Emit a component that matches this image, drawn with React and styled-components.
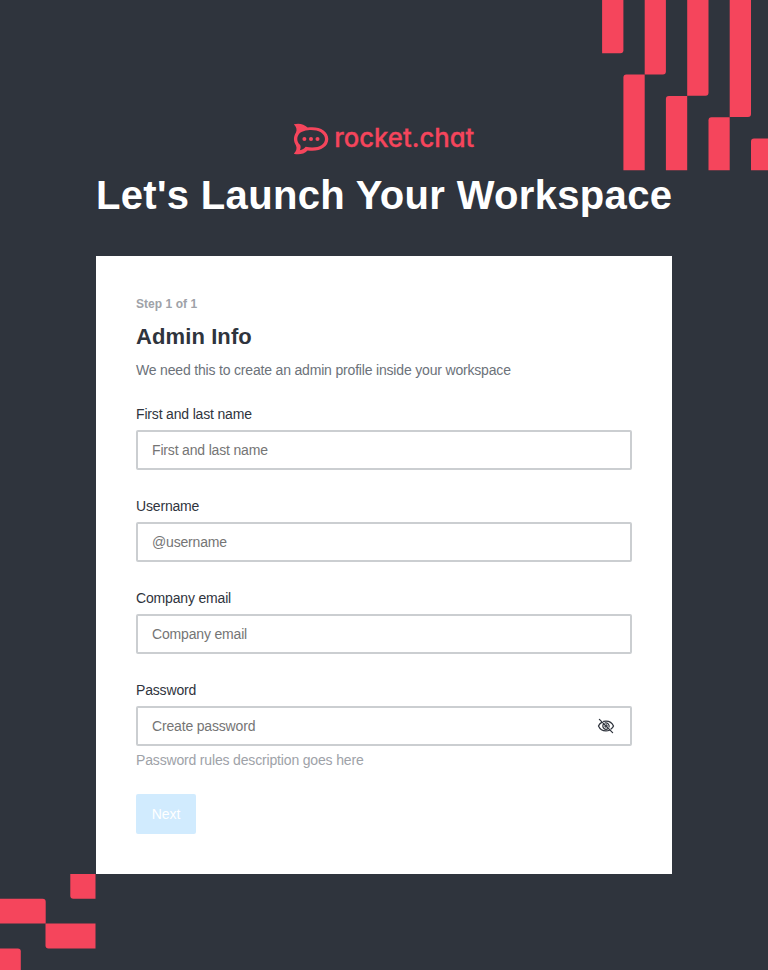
import React from 'react';
import styled, { createGlobalStyle } from 'styled-components';

const GlobalStyle = createGlobalStyle`
  *, *::before, *::after { box-sizing: border-box; }
  body {
    margin: 0;
    background: #2f343d;
    font-family: 'Liberation Sans', Arial, sans-serif;
  }
  h1, h2, p { margin: 0; }
`;

const Page = styled.div`
  position: relative;
  display: flex;
  flex-direction: column;
  align-items: center;
  width: 100%;
  height: 970px;
  padding-top: 123px;
  overflow: hidden;
  background: #2f343d;
`;

const Decoration = styled.svg`
  position: absolute;
  fill: #f5455c;
  ${({ $corner }) => ($corner === 'top' ? 'top: 0; right: 0;' : 'bottom: 0; left: 0;')}
`;

const Logo = styled.svg`
  position: relative;
  display: block;
  width: 182px;
  height: 32px;
  overflow: visible;
  fill: #f5455c;
`;

const Wordmark = styled.text`
  font-family: Inter, Lato, sans-serif;
  font-size: 26px;
  font-weight: 500;
  font-feature-settings: 'cv11';
  stroke: #f5455c;
  stroke-width: 0.3px;
`;

const Title = styled.h1`
  position: relative;
  width: 576px;
  height: 48px;
  margin-top: 16px;
  color: #fff;
  font-size: 40px;
  font-weight: 700;
  line-height: 48px;
  letter-spacing: 0.33px;
  white-space: nowrap;
`;

const Card = styled.form`
  display: flex;
  flex-direction: column;
  align-items: flex-start;
  width: 576px;
  height: 618px;
  margin-top: 37px;
  padding: 40px;
  background: #fff;
`;

const Step = styled.p`
  color: #9ea2a8;
  font-size: 12px;
  font-weight: 700;
  line-height: 16px;
  letter-spacing: 0.05px;
`;

const Heading = styled.h2`
  margin-top: 9px;
  color: #2f343d;
  font-size: 22px;
  font-weight: 700;
  line-height: 32px;
  letter-spacing: 0.1px;
`;

const Intro = styled.p`
  margin-top: 7px;
  color: #6c727a;
  font-size: 14px;
  line-height: 20px;
  letter-spacing: -0.18px;
`;

const Fields = styled.div`
  display: flex;
  flex-direction: column;
  gap: 22px;
  width: 100%;
  margin-top: 20px;
`;

const Field = styled.div`
  display: flex;
  flex-direction: column;
  height: 70px;
`;

const Label = styled.label`
  margin: 4px 0 6px;
  color: #2f343d;
  font-size: 14px;
  line-height: 20px;
  letter-spacing: -0.17px;
`;

const InputBox = styled.div`
  display: flex;
  flex: none;
  align-items: center;
  height: 40px;
  padding: 0 14px;
  border: 2px solid #cbced1;
  border-radius: 2px;
  background: #fff;
`;

const Input = styled.input`
  flex: 1;
  min-width: 0;
  height: 20px;
  padding: 0;
  border: 0;
  outline: 0;
  background: transparent;
  color: #2f343d;
  font: 14px/20px 'Liberation Sans', Arial, sans-serif;
  letter-spacing: -0.17px;
  &::placeholder { color: #757575; opacity: 1; }
`;

const EyeIcon = styled.svg`
  flex: none;
  width: 20px;
  height: 20px;
  fill: none;
  stroke: #2f343d;
  stroke-width: 1.25;
  stroke-linecap: round;
`;

const Hint = styled.p`
  margin-top: 4px;
  color: #9ea2a8;
  font-size: 14px;
  line-height: 20px;
  letter-spacing: -0.165px;
`;

const NextButton = styled.button`
  width: 60px;
  height: 40px;
  margin-top: 24px;
  padding: 0;
  border: 0;
  border-radius: 2px;
  background: #d1ebfe;
  color: #fff;
  font: 14px/20px 'Liberation Sans', Arial, sans-serif;
  letter-spacing: -0.1px;
`;

const fields = [
  { id: 'name', label: 'First and last name', placeholder: 'First and last name' },
  { id: 'username', label: 'Username', placeholder: '@username' },
  { id: 'email', label: 'Company email', placeholder: 'Company email' },
  { id: 'password', label: 'Password', placeholder: 'Create password', type: 'password' },
];

function TopBars() {
  return (
    <Decoration $corner="top" width="166" height="171" viewBox="0 0 166 171">
      <path d="M0.1 0H21.4V50.2Q21.4 53.2 18.4 53.2H0.1Z" />
      <path d="M42.7 0H63.9V71.5Q63.9 74.5 60.9 74.5H42.7Z" />
      <path d="M85.2 0H106.5V92.8Q106.5 95.8 103.5 95.8H85.2Z" />
      <path d="M127.7 0H149V114.1Q149 117.1 146 117.1H127.7Z" />
      <path d="M21.4 170.3V77.5Q21.4 74.5 24.4 74.5H42.7V170.3Z" />
      <path d="M63.9 170.3V99Q63.9 96 66.9 96H85.2V170.3Z" />
      <path d="M106.5 170.3V120.2Q106.5 117.2 109.5 117.2H127.7V170.3Z" />
      <path d="M149 170.3V141.5Q149 138.5 152 138.5H166V170.3Z" />
    </Decoration>
  );
}

function BottomBars() {
  return (
    <Decoration $corner="bottom" width="96" height="96" viewBox="0 0 96 96">
      <path d="M70.3 0H95.5V24.7H73.3Q70.3 24.7 70.3 21.7Z" />
      <path d="M0 24.7H42.7Q45.7 24.7 45.7 27.7V49.6H0Z" />
      <path d="M45.5 49.6H95.5V74.5H48.5Q45.5 74.5 45.5 71.5Z" />
      <path d="M0 74.5H17.8Q20.8 74.5 20.8 77.5V96H0Z" />
    </Decoration>
  );
}

function RocketLogo() {
  return (
    <Logo viewBox="293 123 182 32" role="img" aria-label="rocket.chat">
      <path
        fillRule="evenodd"
        d="M293.8 124.3C299 122.8 304 124 307.6 127.6C318.6 125.8 328.3 130.6 328.3 139C328.3 147.4 318.6 152.2 307.6 150.4C304 154 299 155 293.8 153.7C296.4 151 297.2 148.4 296 145.4C293.3 141.3 293.3 136.7 296 132.6C297.2 129.5 296.4 127 293.8 124.3ZM299.8 133C296.4 136.6 296.4 141.6 300.2 145.1C301 146.6 300.7 148.6 299.8 150.3C302.4 149.8 304.3 148.4 305.6 146.7C316.2 149.2 325 145.7 325 139C325 132.6 316.6 129.2 308 130.2C304.8 130.5 301.8 131.4 299.8 133Z"
      />
      <circle cx="304.4" cy="139.1" r="2" />
      <circle cx="311" cy="139.1" r="2" />
      <circle cx="317.5" cy="139.1" r="2" />
      <Wordmark x="334.3" y="146.5" textLength="140" lengthAdjust="spacingAndGlyphs">rocket.chat</Wordmark>
    </Logo>
  );
}

function EyeOff() {
  return (
    <EyeIcon viewBox="0 0 20 20" aria-hidden="true">
      <path d="M3.4 3.4L16.6 16.6" />
      <path d="M5.7 6.4C4.2 7.3 3.1 8.5 2.5 10C3.8 13 6.6 14.9 10 14.9C11.2 14.9 12.4 14.7 13.4 14.2M7.6 5.4C8.4 5.2 9.2 5.1 10 5.1C13.4 5.1 16.2 7 17.5 10C17 11.3 16.1 12.3 15 13.1" />
      <path d="M7.8 7.7C6.5 9 6.5 11.1 7.8 12.3C9 13.5 10.9 13.5 12.2 12.4M9.2 6.9C11.5 6.5 13.6 8.5 13.1 10.9" />
      <path d="M10.2 8.9C10.8 9 11.1 9.4 11.1 9.9M8.9 10.2C9 10.8 9.4 11.1 9.9 11.1" />
    </EyeIcon>
  );
}

export default function App() {
  return (
    <Page>
      <GlobalStyle />
      <TopBars />
      <BottomBars />
      <RocketLogo />
      <Title>Let's Launch Your Workspace</Title>
      <Card>
        <Step>Step 1 of 1</Step>
        <Heading>Admin Info</Heading>
        <Intro>We need this to create an admin profile inside your workspace</Intro>
        <Fields>
          {fields.map(({ id, label, placeholder, type = 'text' }) => (
            <Field key={id}>
              <Label htmlFor={id}>{label}</Label>
              <InputBox>
                <Input id={id} type={type} placeholder={placeholder} />
                {type === 'password' && <EyeOff />}
              </InputBox>
            </Field>
          ))}
        </Fields>
        <Hint>Password rules description goes here</Hint>
        <NextButton type="button" disabled>Next</NextButton>
      </Card>
    </Page>
  );
}
